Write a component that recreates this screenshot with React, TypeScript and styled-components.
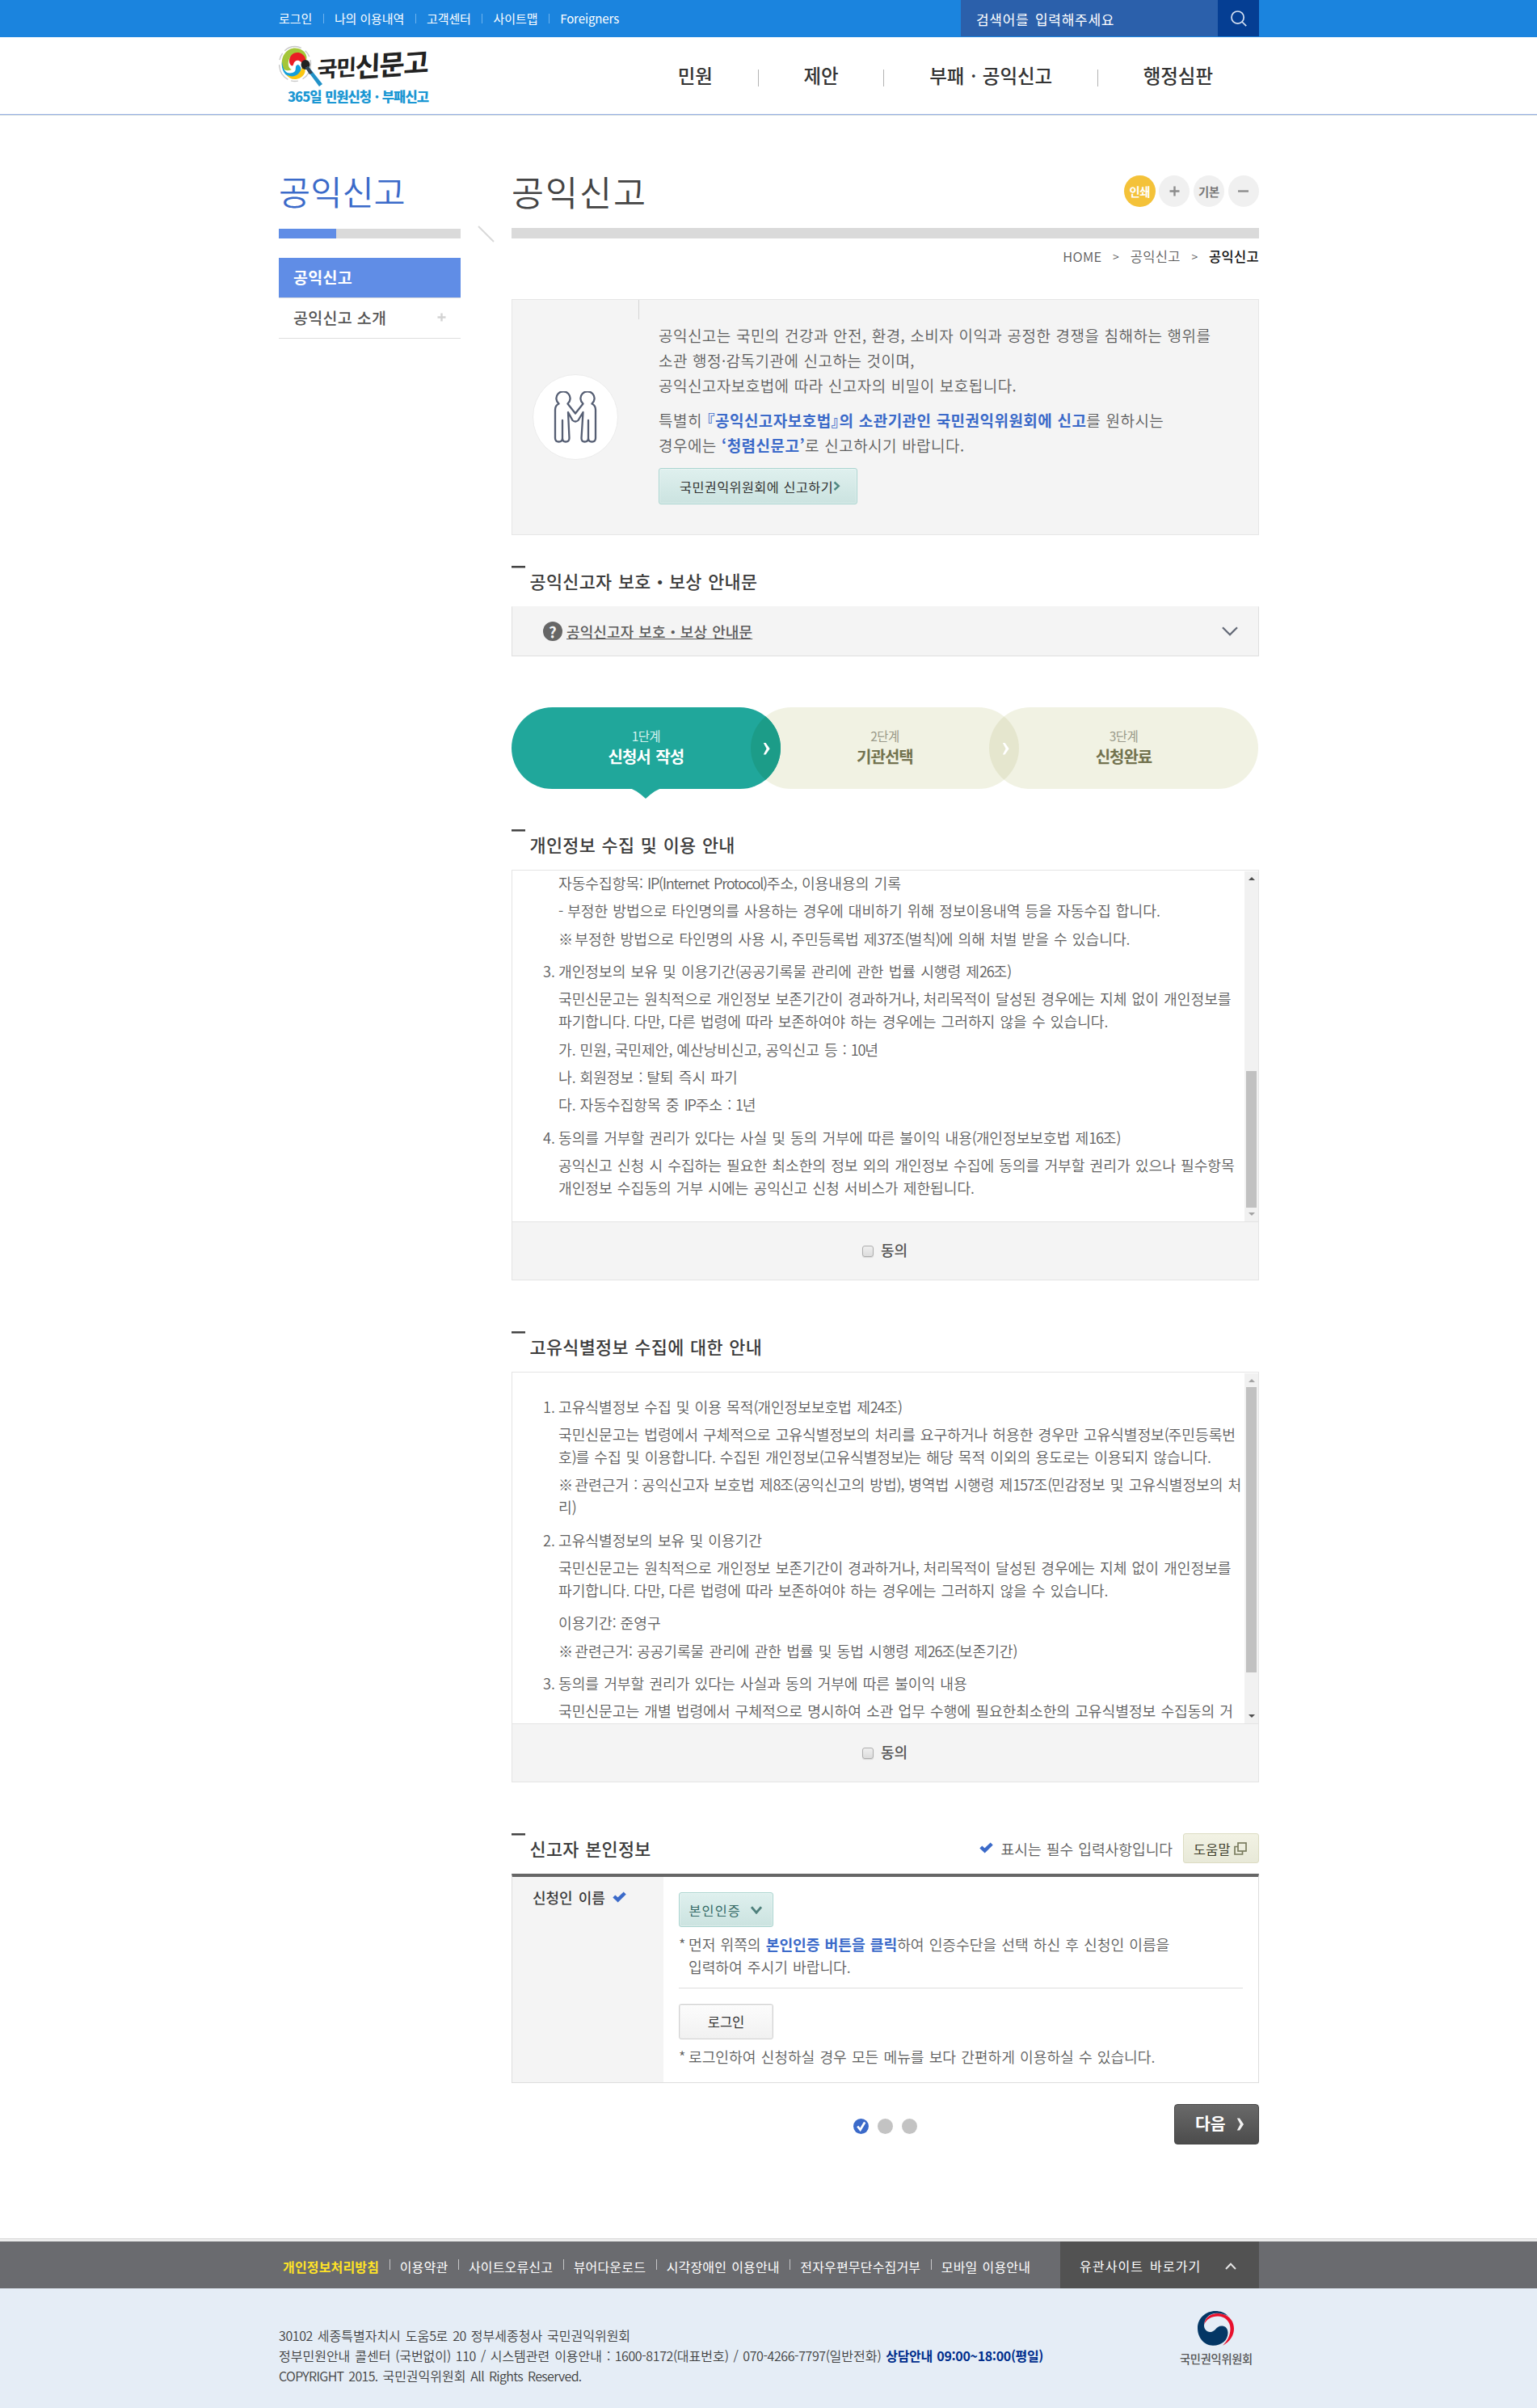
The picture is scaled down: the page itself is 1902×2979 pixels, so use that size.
import React from 'react';
import styled, { createGlobalStyle, css } from 'styled-components';

const blue = '#3b6ac9';

const GlobalStyle = createGlobalStyle`
  * { box-sizing: border-box; }
  html, body { margin: 0; padding: 0; background: #fff; }
  body {
    font-family: "Noto Sans CJK KR", "Noto Sans", sans-serif;
    color: #666;
    font-size: 18.2px;
    white-space: nowrap;
    overflow-x: hidden;
  }
  h1, h2, h3, p, ul, ol { margin: 0; padding: 0; font-weight: inherit; }
  ul, ol { list-style: none; }
  a { color: inherit; text-decoration: none; }
  button { font-family: inherit; margin: 0; padding: 0; }
  svg { display: block; flex: none; }
`;

const bodyText = css`
  color: #5e5e5e;
  font-size: 18.2px;
  font-weight: 350;
  letter-spacing: -0.05px;
  word-spacing: 1.1px;
`;

const Container = styled.div`
  width: 1213px;
  margin: 0 auto;
  position: relative;
  left: 0.5px;
`;

/* Latin letters, digits and punctuation sit tighter than the Hangul around them */
const Tight = styled.span<{ $by: number }>`
  letter-spacing: ${(p) => -p.$by}px;
`;
const tighten = (text: string, by = 1.25) =>
  text
    .split(/(※|[A-Za-z0-9():.,/\-]+)/)
    .map((part, i) => (i % 2 ? <Tight key={i} $by={part === '※' ? 4 : by}>{part}</Tight> : part));

/* ---------- top ---------- */
const TopBar = styled.div`
  height: 46px;
  background: #1b84de;
`;
const TopInner = styled(Container)`
  display: flex;
  justify-content: space-between;
`;
const UtilList = styled.ul`
  display: flex;
  align-items: center;
  height: 45px;
  color: #fff;
  font-size: 15px;
  letter-spacing: -0.1px;
`;
const UtilItem = styled.li`
  display: flex;
  align-items: center;
  &:not(:first-child)::before {
    content: '';
    width: 1px;
    height: 12px;
    margin: 0 13.4px;
    background: #6fb3ee;
  }
`;
const SearchBox = styled.div`
  display: flex;
  width: 369px;
  height: 45px;
`;
const SearchField = styled.div`
  width: 318px;
  padding-left: 19px;
  line-height: 47px;
  background: #2b60ab;
  color: #fff;
  font-size: 17px;
  letter-spacing: 0.7px;
  word-spacing: 2.2px;
`;
const SearchButton = styled.button`
  width: 51px;
  border: 0;
  background: #053e93;
  display: flex;
  align-items: center;
  justify-content: center;
`;

const Header = styled.header`
  height: 97px;
  border-bottom: 1px solid #d3dcdc;
  box-shadow: inset 0 -1px 0 #9ab2e6;
`;
const HeaderInner = styled(Container)`
  display: flex;
  justify-content: space-between;
  height: 95px;
`;
const Logo = styled.div`
  display: grid;
  grid-template-columns: 48px 142px;
  grid-template-rows: 57px 22px;
  padding-top: 8px;
`;
const Emblem = styled.div`
  height: 57px;
`;
const LogoName = styled.div`
  display: flex;
  align-items: center;
  height: 50px;
  color: #222;
  font-weight: 700;
  transform: skewX(-6deg) rotate(-4deg);
  span:nth-child(1) { font-size: 27px; letter-spacing: -1.5px; }
  span:nth-child(2) { font-size: 34px; letter-spacing: -1.4px; }
`;
const LogoSub = styled.div`
  grid-column: 1 / 3;
  padding-left: 11px;
  line-height: 17px;
  color: #1b97d3;
  font-size: 16.6px;
  font-weight: 900;
  letter-spacing: -1px;
  word-spacing: 0.8px;
`;
const MainNav = styled.nav`
  display: flex;
  align-items: center;
  height: 94px;
  padding-right: 57px;
  color: #333;
  font-size: 23.5px;
  font-weight: 500;
`;
const NavItem = styled.a`
  letter-spacing: -0.05px;
  word-spacing: 1.2px;
`;
const NavBar = styled.i`
  width: 1px;
  height: 21px;
  margin: 7px 55.8px 0;
  background: #b3b3b3;
`;

/* ---------- page body ---------- */
const Body = styled(Container)`
  display: grid;
  grid-template-columns: 225px 63px 925px;
`;
const SideTitle = styled.h2`
  margin: 63px 0 17px;
  line-height: 60px;
  color: ${blue};
  font-size: 42.5px;
  font-weight: 350;
  letter-spacing: 0.1px;
`;
const SideRule = styled.div`
  height: 12px;
  background: linear-gradient(to right, #608de6 71px, #dadada 71px);
`;
const SideMenu = styled.ul`
  margin-top: 24px;
  font-size: 19.5px;
  letter-spacing: 0.3px;
`;
const SideItem = styled.li<{ $active?: boolean }>`
  display: flex;
  align-items: center;
  justify-content: space-between;
  height: 50px;
  padding: 0 18px 2px;
  border-bottom: 1px solid #dedede;
  background: ${(p) => (p.$active ? '#608de6' : '#fff')};
  color: ${(p) => (p.$active ? '#fff' : '#555')};
  font-weight: ${(p) => (p.$active ? 700 : 500)};
`;
const Slash = styled.div`
  padding: 136px 0 0 21px;
`;
const TitleRow = styled.div`
  display: flex;
  align-items: center;
  justify-content: space-between;
  height: 60px;
  margin: 63px 0 16px;
`;
const PageTitle = styled.h1`
  color: #444;
  font-size: 43.5px;
  font-weight: 350;
  letter-spacing: 2px;
`;
const Tools = styled.div`
  display: flex;
  gap: 4.3px;
`;
const Tool = styled.button<{ $print?: boolean }>`
  width: 38.5px;
  height: 39px;
  border: 0;
  border-radius: 50%;
  display: flex;
  align-items: center;
  justify-content: center;
  background: ${(p) => (p.$print ? '#f4c239' : '#f0f0f0')};
  color: ${(p) => (p.$print ? '#fff' : '#777')};
  font-size: 14.3px;
  font-weight: 700;
  letter-spacing: -0.3px;
`;
const TitleRule = styled.div`
  height: 13px;
  background: #dadada;
`;
const Crumbs = styled.div`
  display: flex;
  justify-content: flex-end;
  align-items: center;
  gap: 13.7px;
  height: 43px;
  margin-bottom: 32px;
  color: #5e5e5e;
  font-size: 16.5px;
  font-weight: 350;
  letter-spacing: 0.3px;
  b { color: #111; font-weight: 500; }
  i { font-style: normal; font-size: 14px; }
`;

/* ---------- intro ---------- */
const Intro = styled.section`
  position: relative;
  display: flex;
  height: 292px;
  border: 1px solid #e6e6e6;
  background: #f4f4f4;
  &::before {
    content: '';
    position: absolute;
    left: 156px;
    top: 0;
    width: 1px;
    height: 24px;
    background: #d6d6d6;
  }
`;
const IntroIcon = styled.div`
  width: 106px;
  height: 106px;
  margin: 92px 50px 0 25px;
  border: 1px solid #ececec;
  border-radius: 50%;
  background: #fff;
  display: flex;
  align-items: center;
  justify-content: center;
`;
const IntroText = styled.div`
  padding-top: 28px;
  line-height: 31px;
  color: #5e5e5e;
  font-size: 19px;
  font-weight: 350;
  letter-spacing: 0.47px;
  word-spacing: 0.4px;
  p + p { margin-top: 12px; }
  b { color: ${blue}; font-weight: 700; font-feature-settings: 'halt'; }
`;
const MintButton = styled.button`
  display: flex;
  align-items: center;
  border: 1px solid #a9d4cf;
  border-radius: 3px;
  background: linear-gradient(#dff0ee, #cbe3e0);
  box-shadow: inset 0 0 0 1px rgba(255, 255, 255, 0.35);
  font-size: 16.3px;
  font-weight: 400;
`;
const ReportButton = styled(MintButton)`
  width: 246px;
  height: 45px;
  margin-top: 13px;
  padding-left: 25px;
  color: #333;
  letter-spacing: 0.4px;
  word-spacing: 0.6px;
`;

/* ---------- section titles ---------- */
const SectionTitle = styled.div<{ $top: number }>`
  display: flex;
  justify-content: space-between;
  height: 50px;
  margin-top: ${(p) => p.$top}px;
`;
const SectionName = styled.h3`
  display: flex;
  color: #3c3c3c;
  font-size: 21.8px;
  font-weight: 500;
  line-height: 38px;
  letter-spacing: 0.35px;
  word-spacing: 1px;
  &::before {
    content: '';
    width: 17px;
    height: 3px;
    margin-right: 5.5px;
    background: linear-gradient(#444 2px, #999 2px);
  }
`;

const Accordion = styled.div`
  display: flex;
  align-items: center;
  height: 62px;
  padding: 0 25px 0 38px;
  border: 1px solid #dfdfdf;
  border-top-color: #f4f4f4;
  background: #f4f4f4;
`;
const QuestionMark = styled.span`
  width: 24px;
  height: 24px;
  border-radius: 50%;
  background: #666;
  color: #f4f4f4;
  font-size: 19px;
  font-weight: 700;
  line-height: 23px;
  text-align: center;
`;
const AccordionLink = styled.a`
  flex: 1;
  margin: 0 0 0 5px;
  color: #5c5c5c;
  font-weight: 500;
  font-size: 18px;
  letter-spacing: 0.12px;
  word-spacing: 0.8px;
  text-decoration: underline;
  text-decoration-thickness: 1px;
  text-underline-offset: 1px;
`;

/* ---------- steps ---------- */
const Steps = styled.ol`
  display: flex;
  height: 101px;
  margin-top: 63px;
`;
const Step = styled.li<{ $order: number }>`
  position: relative;
  z-index: ${(p) => 3 - p.$order};
  width: 332.6px;
  flex: none;
  margin-left: ${(p) => (p.$order ? '-37px' : 0)};
`;
const Pill = styled.div<{ $active?: boolean; $last?: boolean }>`
  position: relative;
  overflow: hidden;
  height: 101px;
  padding-top: 21px;
  border-radius: 51px;
  background: ${(p) => (p.$active ? '#20a79b' : '#f1f2e3')};
  color: ${(p) => (p.$active ? '#fff' : '#73734f')};
  text-align: center;
  &::after {
    content: '';
    display: ${(p) => (p.$last ? 'none' : 'block')};
    position: absolute;
    left: 295.6px;
    top: 0;
    width: 333px;
    height: 101px;
    border-radius: 51px;
    background: ${(p) => (p.$active ? '#1c9c88' : '#e5e6ce')};
  }
`;
const StepNo = styled.div<{ $active?: boolean }>`
  line-height: 28px;
  font-size: 15.5px;
  font-weight: 400;
  letter-spacing: -0.6px;
  color: ${(p) => (p.$active ? '#d5f2ee' : '#999989')};
`;
const StepName = styled.div`
  line-height: 23px;
  font-size: 20px;
  font-weight: 700;
  letter-spacing: -1px;
  word-spacing: 2px;
`;
const StepArrow = styled.svg`
  position: absolute;
  left: 311px;
  top: 43px;
  z-index: 1;
`;
const StepTail = styled.svg`
  position: absolute;
  left: 145px;
  top: 100px;
`;

/* ---------- agreement ---------- */
const Terms = styled.div`
  height: 508px;
  border: 1px solid #e4e4e4;
`;
const TermsView = styled.div`
  display: flex;
  height: 434px;
`;
const TermsText = styled.ol<{ $top: number }>`
  flex: 1;
  overflow: hidden;
  padding: ${(p) => p.$top}px 0 0 38px;
  line-height: 27.9px;
  ${bodyText}
`;
const Clause = styled.li`
  display: grid;
  grid-template-columns: 19px 1fr;
  &:not(:first-child) { margin-top: 12.7px; }
`;
const ClauseBody = styled.div`
  p + p { margin-top: 6.4px; }
  p.far { margin-top: 12.7px; }
`;
const Scroll = styled.div`
  display: flex;
  flex-direction: column;
  align-items: center;
  width: 17px;
  margin-top: 1px;
  background: #f1f1f1;
`;
const Arrow = styled.i<{ $up?: boolean; $dim?: boolean }>`
  width: 0;
  height: 0;
  margin: ${(p) => (p.$up ? '7px 0 6px' : '6px 0 7px')};
  border: 4px solid transparent;
  ${(p) =>
    p.$up
      ? `border-top: 0; border-bottom-color: ${p.$dim ? '#a3a3a3' : '#505050'};`
      : `border-bottom: 0; border-top-color: ${p.$dim ? '#a3a3a3' : '#505050'};`}
`;
const Track = styled.div<{ $before: number; $size: number }>`
  flex: 1;
  width: 13px;
  padding-top: ${(p) => p.$before}px;
  &::before {
    content: '';
    display: block;
    height: ${(p) => p.$size}px;
    background: #c1c1c1;
  }
`;
const Agree = styled.label`
  display: flex;
  align-items: center;
  justify-content: center;
  height: 72px;
  padding: 0 1px 4px 0;
  border-top: 1px solid #e4e4e4;
  background: #f4f4f4;
  color: #555;
  font-size: 18px;
  font-weight: 500;
`;
const Check = styled.input`
  appearance: none;
  width: 14px;
  height: 14px;
  margin: 4px 9px 0 0;
  border: 1px solid #adadad;
  border-radius: 3px;
  background: linear-gradient(#efefef, #dcdcdc);
  box-shadow: 0 1px 1px rgba(0, 0, 0, 0.12);
`;

/* ---------- applicant ---------- */
const Required = styled.div`
  display: flex;
  align-items: center;
  height: 37px;
  ${bodyText}
  svg { margin: -2px 9.5px 0 0; }
`;
const HelpButton = styled.button`
  display: flex;
  align-items: center;
  width: 94px;
  height: 37px;
  margin-left: 13px;
  padding-left: 12px;
  border: 1px solid #dcdcc2;
  border-radius: 3px;
  background: linear-gradient(#f2f2e4, #e8e9d8);
  color: #3e3e2c;
  font-size: 16.3px;
  font-weight: 400;
  letter-spacing: 0.3px;
  svg { margin: 0 0 0 4px; }
`;
const Form = styled.div`
  display: grid;
  grid-template-columns: 187px 1fr;
  height: 259px;
  border: 1px solid #ddd;
  border-top: 4px solid #666;
`;
const FormLabel = styled.div`
  display: flex;
  align-items: flex-start;
  padding: 11px 0 0 25px;
  background: #f4f4f4;
  color: #3c3c3c;
  font-size: 18px;
  font-weight: 500;
  line-height: 28px;
  word-spacing: 2px;
  svg { margin: 7px 0 0 9px; }
`;
const FormCell = styled.div`
  padding: 19px 19px 0;
`;
const VerifyButton = styled(MintButton)`
  width: 117px;
  height: 43px;
  padding-left: 11.5px;
  color: #356a66;
  letter-spacing: 1.1px;
  svg { margin-left: 12px; }
`;
const Note = styled.p`
  display: grid;
  grid-template-columns: 12px 1fr;
  line-height: 28px;
  ${bodyText}
  b { color: ${blue}; font-weight: 700; }
`;
const VerifyNote = styled(Note)`
  margin-top: 7px;
  padding-bottom: 12px;
  border-bottom: 1px solid #ddd;
`;
const LoginButton = styled.button`
  display: block;
  width: 117px;
  height: 44px;
  margin: 19px 0 7px;
  border: 1px solid #d3d3d3;
  border-radius: 3px;
  background: linear-gradient(#fcfcfc, #f1f1f1);
  box-shadow: inset 0 0 0 1px #ececec;
  color: #333;
  font-size: 16.5px;
  font-weight: 400;
`;
const Pager = styled.div`
  display: grid;
  grid-template-columns: 1fr auto 1fr;
  height: 50px;
  margin-top: 26px;
`;
const Dots = styled.div`
  grid-column: 2;
  display: flex;
  gap: 11px;
  padding-top: 18px;
`;
const Dot = styled.span<{ $on?: boolean }>`
  display: flex;
  align-items: center;
  justify-content: center;
  width: 19px;
  height: 19px;
  border-radius: 50%;
  background: ${(p) => (p.$on ? blue : '#c3c3c3')};
`;
const NextButton = styled.button`
  justify-self: end;
  display: flex;
  align-items: center;
  width: 105px;
  height: 50px;
  padding: 0 0 4px 25px;
  border: 1px solid #454545;
  border-radius: 4px;
  background: linear-gradient(#696969, #4c4c4c);
  color: #fff;
  font-size: 20.5px;
  font-weight: 700;
  svg { margin: 3px 0 0 13px; }
`;

/* ---------- footer ---------- */
const Footer = styled.footer`
  margin-top: 116px;
  height: 210px;
  border-top: 1px solid #dadada;
  background: linear-gradient(#ececec 3px, #e5edf6 3px);
  padding-top: 3px;
`;
const FooterBar = styled.div`
  height: 58px;
  background: #6a6b6f;
`;
const FooterBarInner = styled(Container)`
  display: flex;
  align-items: center;
  justify-content: space-between;
  height: 58px;
`;
const FooterMenu = styled.ul`
  display: flex;
  align-items: center;
  padding: 4px 0 0 5px;
  color: #fff;
  font-size: 16px;
  letter-spacing: 0.17px;
  word-spacing: 1.4px;
`;
const FooterItem = styled.li<{ $strong?: boolean }>`
  display: flex;
  align-items: center;
  color: ${(p) => (p.$strong ? '#ffe326' : '#fff')};
  font-weight: ${(p) => (p.$strong ? 700 : 400)};
  &:not(:first-child)::before {
    content: '';
    width: 1px;
    height: 13px;
    margin: -5px 12px 0 12.6px;
    background: #c6c6c8;
  }
`;
const Related = styled.a`
  display: flex;
  align-items: center;
  justify-content: space-between;
  width: 246px;
  height: 58px;
  padding: 2px 28px 0 24px;
  background: #525252;
  color: #fff;
  font-size: 16px;
  letter-spacing: 1.1px;
  word-spacing: 2.4px;
`;
const FooterInfo = styled(Container)`
  display: flex;
  justify-content: space-between;
`;
const Address = styled.div`
  padding-top: 46px;
  line-height: 25px;
  color: #3f3f3f;
  font-size: 16px;
  font-weight: 350;
  word-spacing: 1.4px;
  b { color: #002d8c; font-weight: 700; letter-spacing: -0.35px; }
`;
const Agency = styled.div`
  width: 92px;
  margin: 28px 7px 0 0;
  display: flex;
  flex-direction: column;
  align-items: center;
  color: #555;
  font-size: 14.3px;
  font-weight: 500;
  line-height: 24px;
  letter-spacing: -0.3px;
  svg { margin-bottom: 3px; }
`;

const RequiredMark = () => (
  <svg width="17" height="14" viewBox="0 0 17 14">
    <path d="M1.8 6 L6.6 10.4 L15.2 2" fill="none" stroke={blue} strokeWidth="4.4" />
  </svg>
);

const Chevron = ({ w, h, color, width = 2 }: { w: number; h: number; color: string; width?: number }) => (
  <svg width={w} height={h} viewBox={`0 0 ${w} ${h}`}>
    <path
      d={`M1 1.2 L${w / 2} ${h - 1.8} L${w - 1} 1.2`}
      fill="none"
      stroke={color}
      strokeWidth={width}
    />
  </svg>
);

const clauses1 = [
  {
    no: '',
    lines: [
      '자동수집항목: IP(Internet Protocol)주소, 이용내용의 기록',
      '- 부정한 방법으로 타인명의를 사용하는 경우에 대비하기 위해 정보이용내역 등을 자동수집 합니다.',
      '※ 부정한 방법으로 타인명의 사용 시, 주민등록법 제37조(벌칙)에 의해 처벌 받을 수 있습니다.',
    ],
  },
  {
    no: '3.',
    lines: [
      '개인정보의 보유 및 이용기간(공공기록물 관리에 관한 법률 시행령 제26조)',
      '국민신문고는 원칙적으로 개인정보 보존기간이 경과하거나, 처리목적이 달성된 경우에는 지체 없이 개인정보를\n파기합니다. 다만, 다른 법령에 따라 보존하여야 하는 경우에는 그러하지 않을 수 있습니다.',
      '가. 민원, 국민제안, 예산낭비신고, 공익신고 등 : 10년',
      '나. 회원정보 : 탈퇴 즉시 파기',
      '다. 자동수집항목 중 IP주소 : 1년',
    ],
  },
  {
    no: '4.',
    lines: [
      '동의를 거부할 권리가 있다는 사실 및 동의 거부에 따른 불이익 내용(개인정보보호법 제16조)',
      '공익신고 신청 시 수집하는 필요한 최소한의 정보 외의 개인정보 수집에 동의를 거부할 권리가 있으나 필수항목\n개인정보 수집동의 거부 시에는 공익신고 신청 서비스가 제한됩니다.',
    ],
  },
];

const clauses2 = [
  {
    no: '1.',
    lines: [
      '고유식별정보 수집 및 이용 목적(개인정보보호법 제24조)',
      '국민신문고는 법령에서 구체적으로 고유식별정보의 처리를 요구하거나 허용한 경우만 고유식별정보(주민등록번\n호)를 수집 및 이용합니다. 수집된 개인정보(고유식별정보)는 해당 목적 이외의 용도로는 이용되지 않습니다.',
      '※ 관련근거 : 공익신고자 보호법 제8조(공익신고의 방법), 병역법 시행령 제157조(민감정보 및 고유식별정보의 처\n리)',
    ],
  },
  {
    no: '2.',
    lines: [
      '고유식별정보의 보유 및 이용기간',
      '국민신문고는 원칙적으로 개인정보 보존기간이 경과하거나, 처리목적이 달성된 경우에는 지체 없이 개인정보를\n파기합니다. 다만, 다른 법령에 따라 보존하여야 하는 경우에는 그러하지 않을 수 있습니다.',
      '이용기간: 준영구',
      '※ 관련근거: 공공기록물 관리에 관한 법률 및 동법 시행령 제26조(보존기간)',
    ],
    far: 2,
  },
  {
    no: '3.',
    lines: [
      '동의를 거부할 권리가 있다는 사실과 동의 거부에 따른 불이익 내용',
      '국민신문고는 개별 법령에서 구체적으로 명시하여 소관 업무 수행에 필요한최소한의 고유식별정보 수집동의 거',
    ],
  },
];

type ClauseData = { no: string; lines: string[]; far?: number };

const Agreement = ({
  clauses,
  top,
  before,
  size,
  atEnd,
}: {
  clauses: ClauseData[];
  top: number;
  before: number;
  size: number;
  atEnd?: boolean;
}) => (
  <Terms>
    <TermsView>
      <TermsText $top={top}>
        {clauses.map((c, i) => (
          <Clause key={i}>
            <span>{c.no}</span>
            <ClauseBody>
              {c.lines.map((line, n) => (
                <p key={n} className={c.far === n ? 'far' : undefined}>
                  {line.split('\n').map((part, k) => (
                    <React.Fragment key={k}>
                      {k > 0 && <br />}
                      {tighten(part)}
                    </React.Fragment>
                  ))}
                </p>
              ))}
            </ClauseBody>
          </Clause>
        ))}
      </TermsText>
      <Scroll>
        <Arrow $up $dim={!atEnd} />
        <Track $before={before} $size={size} />
        <Arrow $dim={atEnd} />
      </Scroll>
    </TermsView>
    <Agree>
      <Check type="checkbox" />
      동의
    </Agree>
  </Terms>
);

const steps = ['신청서 작성', '기관선택', '신청완료'];
const utils = ['로그인', '나의 이용내역', '고객센터', '사이트맵', 'Foreigners'];
const navs = ['민원', '제안', '부패 · 공익신고', '행정심판'];
const footerLinks = [
  '개인정보처리방침',
  '이용약관',
  '사이트오류신고',
  '뷰어다운로드',
  '시각장애인 이용안내',
  '전자우편무단수집거부',
  '모바일 이용안내',
];

export default function App() {
  return (
    <div lang="ko">
      <GlobalStyle />
      <TopBar>
        <TopInner>
          <UtilList>
            {utils.map((u) => (
              <UtilItem key={u}>{u}</UtilItem>
            ))}
          </UtilList>
          <SearchBox>
            <SearchField>검색어를 입력해주세요</SearchField>
            <SearchButton aria-label="검색">
              <svg width="20" height="20" viewBox="0 0 20 20" fill="none" stroke="#d5e0f2" strokeWidth="1.7">
                <circle cx="8.6" cy="8.6" r="7.6" />
                <path d="M14 14 L19.2 19.2" />
              </svg>
            </SearchButton>
          </SearchBox>
        </TopInner>
      </TopBar>

      <Header>
        <HeaderInner>
          <Logo>
            <Emblem>
              <svg width="56" height="57" viewBox="0 0 56 57">
                <ellipse cx="20" cy="25" rx="19.5" ry="21.5" fill="none" stroke="#c9c9c9" strokeWidth="1.4" strokeDasharray="22 6 9 4" />
                <path d="M4 27 C2 12 14 3 24 6 C33 8 37 17 33 22 C29 10 14 10 12 22 C11 27 13 31 16 32 C9 35 5 32 4 27Z" fill="#a4c639" />
                <path d="M13 23 C12 13 22 8 29 13 C35 17 34 25 30 27 C28 20 20 18 18 26 C17 29 14 27 13 23Z" fill="#ea1c24" />
                <path d="M4 22 C5 34 10 38 17 36 C24 34 18 27 24 26 C30 29 28 38 21 41 C10 44 2 34 4 22Z" fill="#129fdc" />
                <path d="M9 38 C18 44 27 38 29 28 C35 30 33 39 27 42 C20 46 13 44 9 38Z" fill="#fbc60f" />
                <ellipse cx="33" cy="26" rx="5.5" ry="6" fill="#222" />
                <path d="M33 30 L36.5 28 L54 50 L50 53Z" fill="#2292c8" />
                <path d="M33 30 L36.5 28 L42 36 L38 38Z" fill="#345" />
              </svg>
            </Emblem>
            <LogoName>
              <span>국민</span>
              <span>신문고</span>
            </LogoName>
            <LogoSub>365일 민원신청 · 부패신고</LogoSub>
          </Logo>
          <MainNav>
            {navs.map((n, i) => (
              <React.Fragment key={n}>
                {i > 0 && <NavBar />}
                <NavItem>{n}</NavItem>
              </React.Fragment>
            ))}
          </MainNav>
        </HeaderInner>
      </Header>

      <Body>
        <aside>
          <SideTitle>공익신고</SideTitle>
          <SideRule />
          <SideMenu>
            <SideItem $active>공익신고</SideItem>
            <SideItem>
              공익신고 소개
              <svg width="11" height="11" viewBox="0 0 11 11" stroke="#d3d3d3" strokeWidth="2.4">
                <path d="M5.5 0.5 V10.5 M0.5 5.5 H10.5" />
              </svg>
            </SideItem>
          </SideMenu>
        </aside>
        <Slash>
          <svg width="21" height="21" viewBox="0 0 21 21">
            <path d="M1 1 L20 20" stroke="#d8d8d8" strokeWidth="2" />
          </svg>
        </Slash>
        <main>
          <TitleRow>
            <PageTitle>공익신고</PageTitle>
            <Tools>
              <Tool $print>인쇄</Tool>
              <Tool aria-label="확대">
                <svg width="13" height="13" viewBox="0 0 13 13" stroke="#8c8c8c" strokeWidth="2.4">
                  <path d="M6.5 0.5 V12.5 M0.5 6.5 H12.5" />
                </svg>
              </Tool>
              <Tool>기본</Tool>
              <Tool aria-label="축소">
                <svg width="13" height="3" viewBox="0 0 13 3" stroke="#8c8c8c" strokeWidth="2.4">
                  <path d="M0 1.5 H13" />
                </svg>
              </Tool>
            </Tools>
          </TitleRow>
          <TitleRule />
          <Crumbs>
            <span>HOME</span>
            <i>&gt;</i>
            <span>공익신고</span>
            <i>&gt;</i>
            <b>공익신고</b>
          </Crumbs>

          <Intro>
            <IntroIcon>
              <svg width="54" height="64" viewBox="0 0 54 64" fill="none" stroke="#555e73" strokeWidth="2.3" strokeLinejoin="round" strokeLinecap="round">
                <path d="M6.5 15.5 A8.6 8.6 0 1 1 17.5 15.5 L27 27.5 L36.5 15.5 A8.6 8.6 0 1 1 47.5 15.5 Q52 17.5 52 23 V58 Q52 62.5 47.5 62.5 Q43 62.5 43 58 V36 V58 Q43 62.5 38.5 62.5 Q34.5 62.5 34.5 58 L36.5 26 L30.5 36 Q27 39 23.5 36 L18 26 L19.5 58 Q19.5 62.5 15 62.5 Q11 62.5 11 58 V36 V58 Q11 62.5 6.5 62.5 Q2 62.5 2 58 V23 Q2 17.5 6.5 15.5" />
              </svg>
            </IntroIcon>
            <IntroText>
              <p>
                공익신고는 국민의 건강과 안전, 환경, 소비자 이익과 공정한 경쟁을 침해하는 행위를
                <br />
                소관 행정·감독기관에 신고하는 것이며,
                <br />
                공익신고자보호법에 따라 신고자의 비밀이 보호됩니다.
              </p>
              <p>
                특별히 <b>『공익신고자보호법』의 소관기관인 국민권익위원회에 신고</b>를 원하시는
                <br />
                경우에는 <b>‘청렴신문고’</b>로 신고하시기 바랍니다.
              </p>
              <ReportButton>
                국민권익위원회에 신고하기
                <svg width="9" height="13" viewBox="0 0 9 13">
                  <path d="M1.5 1.5 L6.8 6.3 L1.5 11" fill="none" stroke="#4f8782" strokeWidth="2.4" />
                </svg>
              </ReportButton>
            </IntroText>
          </Intro>

          <SectionTitle $top={38}>
            <SectionName>공익신고자 보호・보상 안내문</SectionName>
          </SectionTitle>
          <Accordion>
            <QuestionMark>?</QuestionMark>
            <AccordionLink>공익신고자 보호・보상 안내문</AccordionLink>
            <Chevron w={20} h={12} color="#646a77" width={2.3} />
          </Accordion>

          <Steps>
            {steps.map((s, i) => (
              <Step key={s} $order={i}>
                <Pill $active={i === 0} $last={i === 2}>
                  <StepNo $active={i === 0}>{i + 1}단계</StepNo>
                  <StepName>{s}</StepName>
                </Pill>
                {i < 2 && (
                  <StepArrow width="10" height="17" viewBox="0 0 10 17">
                    <path d="M0.8 1 H3.6 L8.6 8.3 L3.6 15.6 H0.8 L4.6 8.3Z" fill="#fff" />
                  </StepArrow>
                )}
                {i === 0 && (
                  <StepTail width="42" height="13" viewBox="0 0 42 13">
                    <path d="M0 0 Q8 1 21 13 Q34 1 42 0Z" fill="#20a79b" />
                  </StepTail>
                )}
              </Step>
            ))}
          </Steps>

          <SectionTitle $top={50}>
            <SectionName>개인정보 수집 및 이용 안내</SectionName>
          </SectionTitle>
          <Agreement clauses={clauses1} top={2} before={230} size={169} atEnd />

          <SectionTitle $top={63}>
            <SectionName>고유식별정보 수집에 대한 안내</SectionName>
          </SectionTitle>
          <Agreement clauses={clauses2} top={28.5} before={0} size={353} />

          <SectionTitle $top={63}>
            <SectionName>신고자 본인정보</SectionName>
            <Required>
              <RequiredMark />
              표시는 필수 입력사항입니다
              <HelpButton>
                도움말
                <svg width="16" height="16" viewBox="0 0 16 16" fill="none" stroke="#7a7c5e" strokeWidth="1.7">
                  <rect x="5" y="1" width="10" height="10" />
                  <path d="M5 5.5 H1 V15 H10.5 V11" />
                </svg>
              </HelpButton>
            </Required>
          </SectionTitle>
          <Form>
            <FormLabel>
              신청인 이름
              <RequiredMark />
            </FormLabel>
            <FormCell>
              <VerifyButton>
                본인인증
                <Chevron w={14} h={10} color="#4f807c" width={2.8} />
              </VerifyButton>
              <VerifyNote>
                <span>*</span>
                <span>
                  먼저 위쪽의 <b>본인인증 버튼을 클릭</b>하여 인증수단을 선택 하신 후 신청인 이름을
                  <br />
                  입력하여 주시기 바랍니다.
                </span>
              </VerifyNote>
              <LoginButton>로그인</LoginButton>
              <Note>
                <span>*</span>
                <span>로그인하여 신청하실 경우 모든 메뉴를 보다 간편하게 이용하실 수 있습니다.</span>
              </Note>
            </FormCell>
          </Form>

          <Pager>
            <Dots>
              <Dot $on>
                <svg width="12" height="13" viewBox="0 0 12 13">
                  <path d="M1.2 6.5 L4.6 10.8 L10.2 1.5" fill="none" stroke="#fff" strokeWidth="2.7" />
                </svg>
              </Dot>
              <Dot />
              <Dot />
            </Dots>
            <NextButton>
              다음
              <svg width="10" height="16" viewBox="0 0 10 16">
                <path d="M0.8 0.6 H4 L9 8 L4 15.4 H0.8 L4.8 8Z" fill="#f2f2f2" />
              </svg>
            </NextButton>
          </Pager>
        </main>
      </Body>

      <Footer>
        <FooterBar>
          <FooterBarInner>
            <FooterMenu>
              {footerLinks.map((l, i) => (
                <FooterItem key={l} $strong={i === 0}>
                  {l}
                </FooterItem>
              ))}
            </FooterMenu>
            <Related>
              유관사이트 바로가기
              <svg width="14" height="9" viewBox="0 0 14 9">
                <path d="M1 8 L7 1.8 L13 8" fill="none" stroke="#e6e6e6" strokeWidth="2" />
              </svg>
            </Related>
          </FooterBarInner>
        </FooterBar>
        <FooterInfo>
          <Address>
            {tighten('30102 세종특별자치시 도움5로 20 정부세종청사 국민권익위원회', 0.4)}
            <br />
            {tighten(
              '정부민원안내 콜센터 (국번없이) 110 / 시스템관련 이용안내 : 1600-8172(대표번호) / 070-4266-7797(일반전화) ',
              0.4,
            )}
            <b>상담안내 09:00~18:00(평일)</b>
            <br />
            {tighten('COPYRIGHT 2015. 국민권익위원회 All Rights Reserved.', 0.65)}
          </Address>
          <Agency>
            <svg width="46" height="44" viewBox="0 0 46 44">
              <path
                d="M8 17 C9 8 16 3 25 3 C37 3 45 11 45 22 C45 31 39 39 31 42.7 C37 37 40.5 30 40.5 22 C40.5 13 34 6.5 25 6.5 C17 6.5 11 10 8 17Z"
                fill="#e8112d"
              />
              <path
                d="M38 6.5 C34 2 28 0 22 0 C10 0 0 9 0 21 C0 33 8 42.7 19 42.7 C30 42.7 37.5 36 37.5 27 C37.5 21 34 18.5 29.5 18.5 C23 18.5 22 26 15.5 26 C11 26 8 22 8 18 C8 9 14 3 24 2.7 C30 2.7 35 4.5 38 6.5Z"
                fill="#043765"
              />
            </svg>
            국민권익위원회
          </Agency>
        </FooterInfo>
      </Footer>
    </div>
  );
}
